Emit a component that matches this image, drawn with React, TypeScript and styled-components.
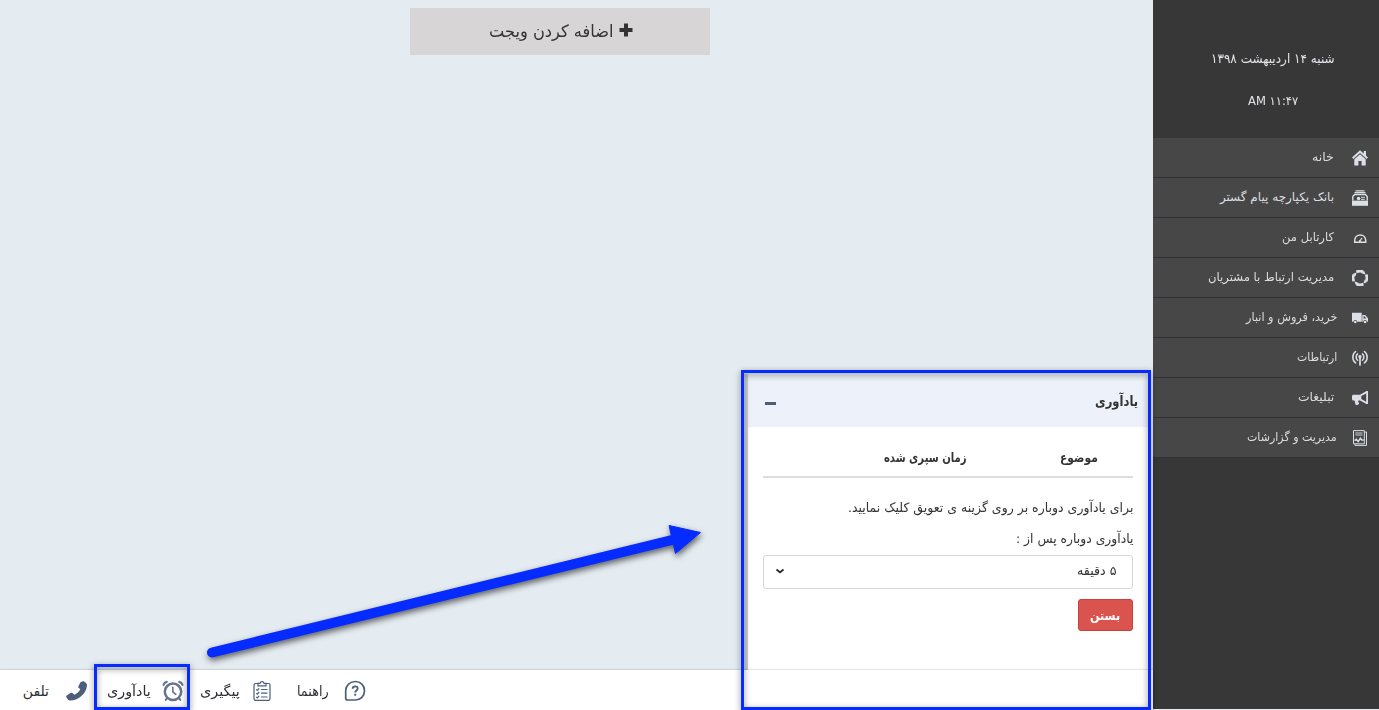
import React, { useLayoutEffect, useRef, useState } from "react";
import styled, { createGlobalStyle } from "styled-components";

const Global = createGlobalStyle`
  * { box-sizing: border-box; }
  body { margin: 0; overflow: hidden; background: #e4ebf1; }
  svg { display: block; }
`;

const Page = styled.div`
  position: relative;
  display: flex;
  direction: rtl;
  width: 1379px;
  height: 710px;
  font-family: "DejaVu Sans", sans-serif;
  color: #333;
  overflow: hidden;
`;

const Slot = styled.span<{ $w: number; $size: number; $bold?: boolean }>`
  display: block;
  flex: none;
  width: ${(p) => p.$w}px;
  height: 20px;
  line-height: 20px;
  font-size: ${(p) => p.$size}px;
  font-weight: ${(p) => (p.$bold ? 700 : 400)};
  white-space: nowrap;
`;
const Inner = styled.span`
  display: inline-block;
  transform-origin: right center;
`;

type LabelProps = { w: number; size?: number; bold?: boolean; children: string };

/* Condenses a label horizontally so that it takes exactly its slot's width. */
function Label({ w, size = 12, bold, children }: LabelProps) {
  const ref = useRef<HTMLSpanElement>(null);
  const [scale, setScale] = useState(1);
  useLayoutEffect(() => {
    if (ref.current) setScale(w / ref.current.offsetWidth);
  }, [w, children]);
  return (
    <Slot $w={w} $size={size} $bold={bold}>
      <Inner ref={ref} style={{ transform: `scaleX(${scale})` }}>{children}</Inner>
    </Slot>
  );
}

/* ---------- sidebar ---------- */
const Sidebar = styled.aside`
  flex: none;
  width: 226px;
  height: 709px;
  background: #373737;
  color: #e3e4e8;
`;
const Clock = styled.div`
  display: flex;
  flex-direction: column;
  align-items: center;
  gap: 22px;
  height: 138px;
  padding: 49px 0 0 14px;
`;
const MenuItem = styled.div<{ $gap: number }>`
  display: flex;
  align-items: center;
  gap: ${(p) => p.$gap}px;
  height: 40px;
  padding: 0 11px 1px 0;
  background: #474747;
  border-bottom: 1px solid #2f3136;
  color: #dcdde0;
`;
const MenuIcon = styled.svg`
  flex: none;
  width: 16px;
  height: 16px;
  margin-top: 2px;
  color: #dcdfe8;
`;

/* ---------- main area ---------- */
const Main = styled.main`
  flex: 1;
  display: flex;
  flex-direction: column;
  min-width: 0;
`;
const Workspace = styled.section`
  flex: 1;
  display: flex;
  flex-direction: column;
  justify-content: space-between;
  background: #e4ebf1;
`;
const AddWidget = styled.button`
  display: flex;
  align-items: center;
  justify-content: flex-start;
  gap: 5px;
  width: 300px;
  height: 47px;
  margin: 8px 443px 0 0;
  padding: 0 77px 2px 0;
  border: 0;
  background: #d7d5d6;
  color: #333;
  font-family: inherit;
  & > svg { margin-bottom: 2px; }
`;
const Panel = styled.section`
  width: 400px;
  height: 296px;
  margin-right: 5px;
  background: #fff;
  box-shadow: -4px 0 0 #c9cdd4;
`;
const PanelHead = styled.header`
  display: flex;
  align-items: center;
  justify-content: space-between;
  height: 53px;
  padding: 1px 10px 0 17px;
  background: #edf2fa;
`;
const Minus = styled.span`
  width: 11px;
  height: 3px;
  margin-top: 5px;
  background: #4b5f7d;
`;
const PanelBody = styled.div`
  padding: 21px 15px 0;
`;
const TableHead = styled.div`
  display: flex;
  gap: 93px;
  height: 30px;
  padding-right: 35px;
  border-bottom: 2px solid #ddd;
`;
const Notes = styled.div`
  display: flex;
  flex-direction: column;
  gap: 11px;
  padding-top: 20px;
  height: 77px;
`;
const Select = styled.div`
  display: flex;
  align-items: center;
  justify-content: space-between;
  height: 34px;
  padding: 0 15px 2px 11px;
  border: 1px solid #d6d8dc;
  border-radius: 3px;
`;
const CloseButton = styled.button`
  display: flex;
  align-items: center;
  justify-content: center;
  width: 55px;
  height: 32px;
  margin-top: 10px;
  padding: 2px 0 0;
  border: 1px solid #ce3f3b;
  border-radius: 3px;
  background: #d9534f;
  color: #fff;
  font-family: inherit;
`;

/* ---------- bottom bar ---------- */
const BottomBar = styled.footer`
  display: flex;
  direction: ltr;
  align-items: center;
  height: 40px;
  padding: 1px 0 0 23px;
  background: #fff;
  box-shadow: 0 0 2px rgba(0, 0, 0, 0.3);
  color: #2d2f33;
  position: relative;
`;
const Tool = styled.div<{ $gap: number; $after: number }>`
  display: flex;
  align-items: center;
  gap: ${(p) => p.$gap}px;
  margin-right: ${(p) => p.$after}px;
  & > span { direction: rtl; }
  & > svg { flex: none; color: #4b5f7d; }
`;

/* ---------- annotations drawn over the page ---------- */
const Frame = styled.div<{ $x: number; $y: number; $w: number; $h: number }>`
  position: absolute;
  left: ${(p) => p.$x}px;
  top: ${(p) => p.$y}px;
  width: ${(p) => p.$w}px;
  height: ${(p) => p.$h}px;
  border: 3px solid #062bff;
  filter: drop-shadow(0 2px 3px rgba(0, 0, 0, 0.5));
`;
const Arrow = styled.svg`
  position: absolute;
  left: 190px;
  top: 510px;
  filter: drop-shadow(1px 3px 3px rgba(0, 0, 0, 0.6));
`;

const icons: Record<string, React.ReactNode> = {
  home: (
    <g fill="currentColor">
      <path d="M8 .2 0 7.5l1.300 1.500L8 3l6.700 6L16 7.500l-2-1.800V1h-2.300v2.600z" />
      <path d="M8 4.200 2.300 9.300v6.300h4.100v-4.500h3.200v4.500h4.100V9.300z" />
    </g>
  ),
  bank: (
    <g fill="none" stroke="currentColor">
      <path d="M3.500 .8h9M2.500 2.700h11" strokeWidth="1.200" />
      <path d="M.8 10.500V6.500L2.600 4.500h10.800l1.800 2v4" strokeWidth="1.400" />
      <path d="M9 7.300h3.800M9 9.300h3.800" strokeWidth="1" />
      <circle cx="6.600" cy="8.500" r="1.800" fill="currentColor" stroke="none" />
      <path d="M0 10.600h16v5.200H0z" fill="currentColor" stroke="none" />
    </g>
  ),
  gauge: (
    <g fill="none" stroke="currentColor" strokeWidth="1.500">
      <path d="M2.700 12.200v-1.700C2.700 7.300 5 5 8.200 5s5.500 2.300 5.500 5.500v1.700z" />
      <path d="m7.800 11.200 2.200-3.200" strokeWidth="1.200" />
      <circle cx="7.800" cy="10.900" r="1" fill="currentColor" stroke="none" />
    </g>
  ),
  ring: (
    <g fill="none" stroke="currentColor">
      <path d="M4.500 2a6.900 6.900 0 0 1 6.600-.1M14.100 4.600a6.900 6.900 0 0 1 0 6.600M11.300 14.100a6.900 6.900 0 0 1-6.600 0M1.900 11.200a6.900 6.900 0 0 1 0-6.600" strokeWidth="2.800" />
      <path d="m9.600 3.300 4.200 1.500L12 .8zM12.700 9.600l-1.500 4.200 4-1.800zM6.400 12.700l-4.200-1.500L4 15.200zM3.300 6.400l1.500-4.200-4 1.800z" fill="currentColor" stroke="none" />
    </g>
  ),
  truck: (
    <g fill="currentColor">
      <path d="M0 2.800h9.700v9H5.200a1.900 1.900 0 0 0-3.800 0H0z" />
      <path fillRule="evenodd" d="M10.300 5h2.900L16 8.300v3.500h-1a1.900 1.900 0 0 0-3.800 0h-.9zm1.300 1.200v2.300h2.800l-1.900-2.300z" />
      <circle cx="3.300" cy="12" r="1.300" />
      <circle cx="13.100" cy="12" r="1.300" />
    </g>
  ),
  antenna: (
    <g fill="none" stroke="currentColor" strokeWidth="1.500" strokeLinecap="round">
      <path d="M3.600 1.500a7.200 7.200 0 0 0 0 11.400M12.400 1.500a7.200 7.200 0 0 1 0 11.400M5.600 3.900a4.200 4.200 0 0 0 0 6.400M10.400 3.900a4.200 4.200 0 0 1 0 6.400" />
      <circle cx="8" cy="6.800" r="1.700" fill="currentColor" stroke="none" />
      <path d="M8 7v8" strokeWidth="1.700" />
    </g>
  ),
  horn: (
    <g fill="currentColor">
      <path fillRule="evenodd" d="M16 1v13h-1.500L8 10.400H1.500A1.500 1.500 0 0 1 0 8.900V6.200c0-.9.700-1.500 1.500-1.500H8L14.500 1zM14.200 3.400 9.300 6v3l4.900 2.700z" />
      <path d="M2.300 9.500h4l-.2 1.900 1.100 2.300-1.800 1.300H3.700z" />
    </g>
  ),
  report: (
    <g fill="none" stroke="currentColor" strokeWidth="1">
      <path d="M1.500 .6h10.800v13.200H1.500zM12.500 2h2v13.400H3v-1.500" />
      <path d="M3.300 3h7.200M3.300 5h7.200" strokeWidth=".9" />
      <path d="m2.600 10.700 1.800-1.300 1.700 2.200 2.300-3.300 1.300 1.600h2" strokeWidth="1.500" />
    </g>
  ),
};

const menu = [
  { icon: "home", text: "خانه", w: 22, gap: 18 },
  { icon: "bank", text: "بانک یکپارچه پیام گستر", w: 114, gap: 18 },
  { icon: "gauge", text: "کارتابل من", w: 52, gap: 18 },
  { icon: "ring", text: "مدیریت ارتباط با مشتریان", w: 126, gap: 18 },
  { icon: "truck", text: "خرید، فروش و انبار", w: 91, gap: 15 },
  { icon: "antenna", text: "ارتباطات", w: 40, gap: 15 },
  { icon: "horn", text: "تبلیغات", w: 36, gap: 18 },
  { icon: "report", text: "مدیریت و گزارشات", w: 90, gap: 15 },
];

export default function App() {
  return (
    <Page lang="fa">
      <Global />
      <Sidebar>
        <Clock>
          <Label w={124} size={13}>شنبه ۱۴ اردیبهشت ۱۳۹۸</Label>
          <Label w={50}>۱۱:۴۷ AM</Label>
        </Clock>
        {menu.map((m) => (
          <MenuItem key={m.icon} $gap={m.gap}>
            <MenuIcon viewBox="0 0 16 16">{icons[m.icon]}</MenuIcon>
            <Label w={m.w}>{m.text}</Label>
          </MenuItem>
        ))}
      </Sidebar>
      <Main>
        <Workspace>
          <AddWidget>
            <svg width="14" height="14" viewBox="0 0 14 14">
              <path d="M5 .5h4V5h4.500v4H9v4.500H5V9H.5V5H5z" fill="currentColor" />
            </svg>
            <Label w={125} size={17}>اضافه کردن ویجت</Label>
          </AddWidget>
          <Panel>
            <PanelHead>
              <Label w={43} size={14} bold>یادآوری</Label>
              <Minus />
            </PanelHead>
            <PanelBody>
              <TableHead>
                <Label w={38} size={13} bold>موضوع</Label>
                <Label w={83} size={13} bold>زمان سپری شده</Label>
              </TableHead>
              <Notes>
                <Label w={286} size={13}>برای یادآوری دوباره بر روی گزینه ی تعویق کلیک نمایید.</Label>
                <Label w={117} size={13}>یادآوری دوباره پس از :</Label>
              </Notes>
              <Select>
                <Label w={40} size={13}>۵ دقیقه</Label>
                <svg width="10" height="8" viewBox="0 0 10 8">
                  <path d="m1.500 2.500 3.500 3 3.500-3" fill="none" stroke="#222" strokeWidth="1.700" />
                </svg>
              </Select>
              <CloseButton>
                <Label w={30} size={13} bold>بستن</Label>
              </CloseButton>
            </PanelBody>
          </Panel>
        </Workspace>
        <BottomBar>
          <Tool $gap={17} $after={19}>
            <Label w={26} size={14}>تلفن</Label>
            <svg width="22" height="20" viewBox="0 0 22 20">
              <path d="M16.300.5c.7-.4 1.600-.3 2.200.2l1.700 1.500c.6.600.9 1.300.8 2.200-.4 4.300-2.700 8.300-6.200 11.200C11.700 18.200 7.800 19.600 4 19.500c-.9 0-1.600-.4-2.100-1.100L.5 16.400c-.5-.8-.3-1.700.5-2.200l3.600-2.100c.8-.5 1.600-.4 2.200.2l1.500 1.500c2.600-1 4.900-3 6-5.500l-1.400-1.200c-.6-.6-.8-1.300-.4-2.100l1.800-3.400c.4-.6.900-.9 2-1.100z" fill="currentColor" />
            </svg>
          </Tool>
          <Tool $gap={11} $after={16}>
            <Label w={44} size={14}>یادآوری</Label>
            <svg width="22" height="22" viewBox="0 0 22 22" fill="none" stroke="#66758d" strokeLinecap="round">
              <circle cx="11" cy="11.800" r="8.200" strokeWidth="2.500" />
              <path d="M10.800 7.200v4.600l3 2.500" strokeWidth="1.600" />
              <path d="M1.500 4.800C2 3.300 3.200 2.200 4.700 1.900M20.500 4.800c-.5-1.500-1.700-2.600-3.200-2.900" strokeWidth="2.200" />
              <path d="m4.700 18.700-.9 1.200M17.300 18.700l.9 1.200" strokeWidth="2" />
            </svg>
          </Tool>
          <Tool $gap={13} $after={26}>
            <Label w={40} size={14}>پیگیری</Label>
            <svg width="18" height="20" viewBox="0 0 18 20" fill="none" stroke="currentColor" strokeWidth="1.200">
              <path d="M5 2.500H2.800C1.600 2.500 1 3.200 1 4.300v13.200c0 1.200.6 1.900 1.800 1.900h12.400c1.200 0 1.800-.7 1.800-1.900V4.300c0-1.100-.6-1.800-1.800-1.800H13" />
              <path d="M5 4.800V2.300h2C7.200 1.200 7.800.6 9 .6s1.800.6 2 1.700h2v2.500z" />
              <path d="M8 8.500h6.500M8 12.200h6.500M8 16h6.500M3.300 8.400l1 1L6.200 7.300M3.300 12.100l1 1L6.200 11M3.300 15.900l1 1 1.900-2.100" />
            </svg>
          </Tool>
          <Tool $gap={15} $after={0}>
            <Label w={32} size={14}>راهنما</Label>
            <svg width="22" height="22" viewBox="0 0 22 22" fill="none" stroke="currentColor">
              <path d="M11.300 1.500c5.300 0 9.200 4 9.200 9.200s-3.900 9.300-9.200 9.300H3.700c-1.200 0-2-.8-2-2v-7.300c0-5.200 4.300-9.200 9.600-9.200z" strokeWidth="1.700" />
              <path d="M8.700 8.800c0-1.500 1-2.400 2.500-2.400s2.500.9 2.500 2.200c0 1.900-2.500 2-2.500 4" strokeWidth="1.800" />
              <path d="M11.200 13.700v2" strokeWidth="1.900" />
            </svg>
          </Tool>
        </BottomBar>
      </Main>
      <Arrow width="530" height="170" viewBox="0 0 530 170">
        <path d="M22 142.500 484 29.500" stroke="#062bff" strokeWidth="10" strokeLinecap="round" />
        <path d="m479 15.500 31.500 7-25 21z" fill="#062bff" stroke="#062bff" />
      </Arrow>
      <Frame $x={741} $y={370} $w={410} $h={340} />
      <Frame $x={94} $y={664} $w={96} $h={46} />
    </Page>
  );
}
